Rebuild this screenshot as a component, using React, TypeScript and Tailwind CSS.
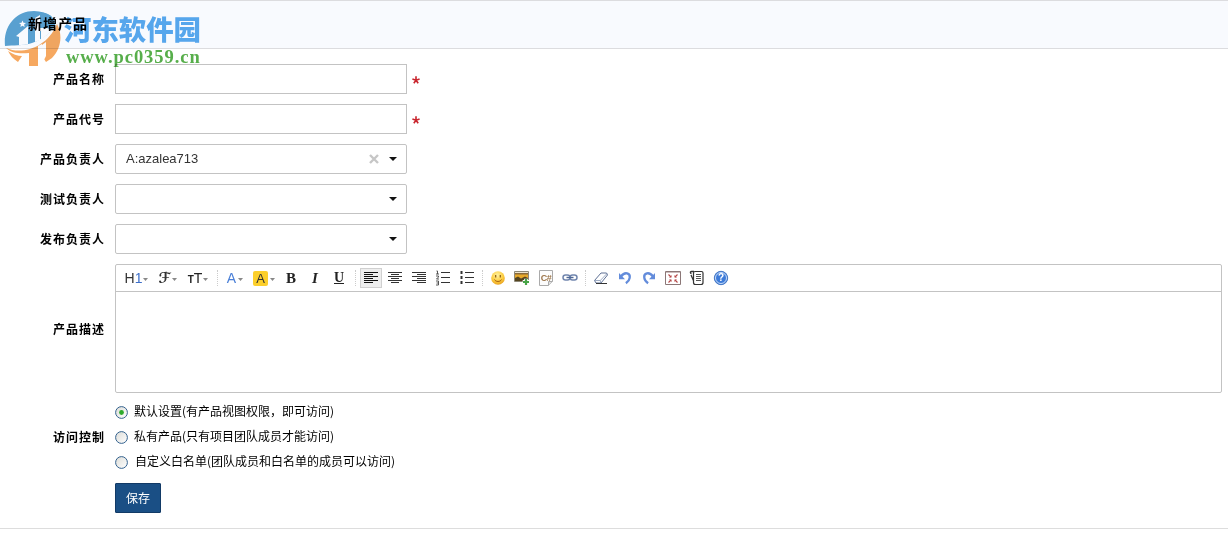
import React, { useState } from "react";
import clsx from "clsx";

type Person = {
  label: string;
  value: string;
};

type Access = {
  id: string;
  label: string;
  gap: string;
};

const people: Person[] = [
  { label: "产品负责人", value: "A:azalea713" },
  { label: "测试负责人", value: "" },
  { label: "发布负责人", value: "" },
];

const accessOptions: Access[] = [
  { id: "open", label: "默认设置(有产品视图权限，即可访问)", gap: "gap-[6px]" },
  { id: "private", label: "私有产品(只有项目团队成员才能访问)", gap: "gap-[6px]" },
  { id: "custom", label: "自定义白名单(团队成员和白名单的成员可以访问)", gap: "gap-[7px]" },
];

const Row = ({
  label,
  raised,
  children,
}: {
  label: string;
  raised?: boolean;
  children: React.ReactNode;
}) => (
  <div className="flex items-center">
    <div
      className={clsx(
        "w-[105px] shrink-0 pr-px text-right text-[12px] leading-[30px] font-bold tracking-[1px] text-black",
        raised && "pb-[10px]",
      )}
    >
      <span className="-mr-px">{label}</span>
    </div>
    <div className="ml-[10px] flex min-w-0 flex-1 items-center">{children}</div>
  </div>
);

const TextField = () => (
  <>
    <input className="h-[30px] w-[292px] border border-[#c3c3c3] bg-white px-[10px] text-[13px] outline-none" />
    <svg viewBox="0 0 8 8" className="mt-[1px] ml-[5px] h-2 w-2" stroke="#c9252d" strokeWidth="1.6" fill="none">
      <path d="M4 .3v3.9M.4 3 4 4.2 7.6 3M4 4.2 1.8 7.3M4 4.2l2.2 3.1" />
    </svg>
  </>
);

const Select = ({ value }: { value: string }) => (
  <div className="flex h-[30px] w-[292px] items-center rounded-[2px] border border-[#c3c3c3] bg-white pl-[10px] pr-[9px]">
    <span className="flex-1 font-['Liberation_Sans',sans-serif] text-[13px] text-[#333]">{value}</span>
    {value && (
      <svg viewBox="0 0 10 10" className="mr-[10px] h-[10px] w-[10px]" stroke="#c6c6c6" strokeWidth="2.4">
        <path d="M1 1l8 8M9 1 1 9" />
      </svg>
    )}
    <svg viewBox="0 0 8 4" className="h-1 w-2" fill="#111">
      <path d="M0 0h8L4 4z" />
    </svg>
  </div>
);

const Caret = () => (
  <svg viewBox="0 0 5 3" className="mt-[3px] h-[3px] w-[5px] shrink-0" fill="#888">
    <path d="M0 0h5L2.5 3z" />
  </svg>
);

const Tool = ({
  width = "w-6",
  active,
  children,
}: {
  width?: string;
  active?: boolean;
  children: React.ReactNode;
}) => (
  <button className={clsx("flex h-[22px] shrink-0 items-center justify-center text-[#333]", width)}>
    {active ? (
      <span className="flex h-[20px] w-[22px] items-center justify-center border border-[#d0d0d0] bg-[#eee]">
        {children}
      </span>
    ) : (
      children
    )}
  </button>
);

const Sep = ({ width }: { width: string }) => (
  <div className={clsx("flex h-4 shrink-0 justify-center", width)}>
    <div className="h-full border-l border-dotted border-[#ccc]" />
  </div>
);

const Icon = ({ children }: { children: React.ReactNode }) => (
  <svg viewBox="0 0 16 16" className="h-4 w-4 shrink-0" fill="none">
    {children}
  </svg>
);

const Toolbar = () => (
  <div className="flex h-[27px] items-center border-b border-[#c3c3c3] pl-[5px] font-['Liberation_Sans',sans-serif] text-[14px]">
    <Tool width="w-[31px]">
      <span className="mr-px text-[14px]">
        H<span className="text-[#3d6fc9]">1</span>
      </span>
      <Caret />
    </Tool>
    <Tool width="w-[31px]">
      <span className="mr-px font-['DejaVu_Serif','DejaVu_Sans',serif] text-[15px] leading-4 font-bold">ℱ</span>
      <Caret />
    </Tool>
    <Tool width="w-[30px]">
      <span className="mr-px text-[14px] text-[#222]">
        <span className="text-[10px] font-bold">T</span>T
      </span>
      <Caret />
    </Tool>
    <Sep width="w-2" />
    <Tool width="w-7">
      <span className="mr-[2px] text-[14px] text-[#4b80d8]">A</span>
      <Caret />
    </Tool>
    <Tool width="w-[30px]">
      <span className="mr-[2px] flex h-[15px] w-[15px] items-center justify-center rounded-[2px] bg-[#fccf2c] text-[13px] leading-none">
        A
      </span>
      <Caret />
    </Tool>
    <Tool>
      <span className="font-['Liberation_Serif',serif] text-[15px] font-bold text-[#222]">B</span>
    </Tool>
    <Tool>
      <span className="font-['Liberation_Serif',serif] text-[15px] font-bold text-[#222] italic">I</span>
    </Tool>
    <Tool>
      <span className="border-b border-[#222] font-['Liberation_Serif',serif] text-[14px] leading-[11px] font-bold text-[#222]">
        U
      </span>
    </Tool>
    <Sep width="w-2" />
    <Tool active>
      <Icon>
        <path d="M1 2.5h14M1 4.5h9M1 6.5h14M1 8.5h9M1 10.5h14M1 12.5h9" stroke="#111" />
      </Icon>
    </Tool>
    <Tool>
      <Icon>
        <path d="M1 2.5h14M4 4.5h8M1 6.5h14M4 8.5h8M1 10.5h14M4 12.5h8" stroke="#333" />
      </Icon>
    </Tool>
    <Tool>
      <Icon>
        <path d="M1 2.5h14M6 4.5h9M1 6.5h14M6 8.5h9M1 10.5h14M6 12.5h9" stroke="#333" />
      </Icon>
    </Tool>
    <Tool>
      <Icon>
        <path d="M6 2.5h9M6 7.5h9M6 12.5h9" stroke="#333" />
        <path
          d="M1.5 1h1v3M1 4h3M1 6h2.5v1L1.5 9H4M1 11h2.5v4H1M1.5 13h2"
          stroke="#444"
          strokeWidth=".9"
        />
      </Icon>
    </Tool>
    <Tool>
      <Icon>
        <path d="M6 2.5h9M6 7.5h9M6 12.5h9" stroke="#333" />
        <path d="M1.5 1h2v3h-2zM1.5 6h2v3h-2zM1.5 11h2v3h-2z" fill="#333" />
      </Icon>
    </Tool>
    <Sep width="w-[7px]" />
    <Tool>
      <Icon>
        <defs>
          <radialGradient id="face" cx=".45" cy=".3" r=".75">
            <stop offset="0" stopColor="#fff2a0" />
            <stop offset=".6" stopColor="#fccb3c" />
            <stop offset="1" stopColor="#e59a1b" />
          </radialGradient>
        </defs>
        <circle cx="8" cy="8" r="6.8" fill="url(#face)" />
        <path d="M5.7 5v2.4M10.3 5v2.4" stroke="#8a5a16" strokeWidth="1.2" />
        <path d="M4.5 9.5c1 2.6 6 2.6 7 0" stroke="#a35f13" />
      </Icon>
    </Tool>
    <Tool>
      <Icon>
        <path d="M.5 1.5h14v10H.5z" fill="#efe6cf" stroke="#8d8878" />
        <path d="M1 3h13v5.5H1z" fill="#e8a92a" />
        <path d="M1 3h13v1.5H1z" fill="#8a6a3a" />
        <path d="M1 8 4 6.5l3 2 4-2 3 1.5v3H1z" fill="#54441f" />
        <path d="M12 8.7v6.6M8.7 12h6.6" stroke="#fff" strokeWidth="3.8" />
        <path d="M12 9v6M9 12h6" stroke="#47a447" strokeWidth="2.2" />
      </Icon>
    </Tool>
    <Tool>
      <div className="grid">
        <svg viewBox="0 0 16 16" className="col-start-1 row-start-1 h-4 w-4" fill="none">
          <path d="M1.5.5h13v11l-4 4h-9z" fill="#fcfcfc" stroke="#aaa" />
          <path d="M14.5 11.5h-4v4" fill="#ddd" stroke="#aaa" />
        </svg>
        <span className="col-start-1 row-start-1 self-center justify-self-center text-[9px] leading-none font-bold tracking-[-0.5px] text-[#9b7448]">
          C#
        </span>
      </div>
    </Tool>
    <Tool>
      <Icon>
        <rect x="1" y="5" width="7" height="5" rx="2.5" stroke="#7186ae" strokeWidth="1.5" />
        <rect x="8" y="5" width="7" height="5" rx="2.5" stroke="#7186ae" strokeWidth="1.5" />
        <path d="M4.5 7.5h7" stroke="#4f6896" strokeWidth="1.4" />
      </Icon>
    </Tool>
    <Sep width="w-[7px]" />
    <Tool>
      <Icon>
        <path d="M1.5 10.5 8 3h5.5l1 2-6.5 8H3z" fill="#fff" stroke="#5f7195" />
        <path d="M1.5 10.5h5.8L14 3.5M7.3 10.5l.7 2.5" stroke="#8899b8" strokeWidth=".8" />
        <path d="M3 13.5h11" stroke="#333" />
      </Icon>
    </Tool>
    <Tool>
      <Icon>
        <path d="M4 6.5c4-5.5 9.5-3.2 8.7 1.3-.3 2.2-1.8 4-3.8 5.4" stroke="#638cdb" strokeWidth="2.3" />
        <path d="M2 3v6.2h6z" fill="#638cdb" />
      </Icon>
    </Tool>
    <Tool>
      <Icon>
        <path d="M12 6.5C8 1 2.5 3.3 3.3 7.8c.3 2.2 1.8 4 3.8 5.4" stroke="#638cdb" strokeWidth="2.3" />
        <path d="M14 3v6.2H8z" fill="#638cdb" />
      </Icon>
    </Tool>
    <Tool>
      <Icon>
        <path d="M.5 1.5h15v13H.5z" fill="#fff" stroke="#8b7777" />
        <path d="M1 2.5h14" stroke="#cbbcbc" />
        <path d="M3.5 4.5 6 7M12.5 4.5 10 7M3.5 12.5 6 10M12.5 12.5 10 10" stroke="#b54848" strokeWidth="1.1" />
        <path d="M6.5 5v2.5H4zM9.5 5v2.5H12zM6.5 12V9.5H4zM9.5 12V9.5H12z" fill="#b54848" />
      </Icon>
    </Tool>
    <Tool>
      <Icon>
        <path
          d="M4.5 6V3c0-1 .5-1.5 1.5-1.5h6.500c1 0 1.500.5 1.500 1.500v9.500c0 1.500-.7 2-2 2H6.500c-1.500 0-2-.7-2-2z"
          fill="#fff"
          stroke="#333"
          strokeWidth="1.2"
        />
        <path d="M5 1.500H2.500c-1.500 0-1.500 2 0 2M2 5l2.500 5.500" stroke="#333" strokeWidth="1.300" />
        <path d="M7 4.500h5M7 6.500h5M7 8.500h5M7 10.500h5" stroke="#555" />
      </Icon>
    </Tool>
    <Tool>
      <div className="grid">
        <svg viewBox="0 0 16 16" className="col-start-1 row-start-1 h-4 w-4" fill="none">
          <circle cx="8" cy="8" r="6.7" fill="#3d7bd9" stroke="#4678c4" />
          <circle cx="8" cy="8" r="5.5" stroke="#c9dcf7" strokeWidth="1" />
        </svg>
        <span className="col-start-1 row-start-1 self-center justify-self-center text-[10px] leading-none font-bold text-white">
          ?
        </span>
      </div>
    </Tool>
  </div>
);

const Radio = ({ checked }: { checked: boolean }) => (
  <svg viewBox="0 0 13 13" className="mt-[3px] h-[13px] w-[13px] shrink-0">
    <defs>
      <linearGradient id="well" x1="0" y1="0" x2="1" y2="1">
        <stop offset="0" stopColor="#dcdcd7" />
        <stop offset="1" stopColor="#fff" />
      </linearGradient>
    </defs>
    <circle cx="6.5" cy="6.5" r="5.9" fill="url(#well)" stroke="#34628f" />
    {checked && <circle cx="6.5" cy="6.5" r="2.4" fill="#2eaa2c" />}
  </svg>
);

const Watermark = () => (
  <div className="pointer-events-none absolute top-[9px] left-[4px] flex">
    <svg viewBox="0 0 58 58" className="h-[58px] w-[58px] opacity-85">
      <path d="M1 37C-1 17 12 2 30 2c7 0 13 2 18 6l4 6c-5 10-13 16-24 20C19 37 9 36 1 37z" fill="#3f94ca" />
      <path d="m18.500 11.500 1 2.300 2.500.2-1.900 1.600.6 2.400-2.200-1.300-2.100 1.300.5-2.400-1.900-1.600 2.500-.2z" fill="#fff" />
      <path d="M12 27 24 17v18c-3 1-6 1.200-9 1V28z" fill="#fff" />
      <path d="M31 9 36 6v13h6c3 0 4.500 1.500 4.500 4L37 31V22h-1v9l-5 2z" fill="#fff" />
      <path d="M36 4c5-1 9 1 12 4l-5 8h-7z" fill="#3f94ca" />
      <path d="M2 39c16 7 41 0 51-24 6 11 4 25-5 34l-6 4-4-6V35l-4 2v20h-9V44C16 45 7 44 2 39z" fill="#f59a45" />
      <path d="M4 42c4 3 10 5 14 5l-4 6C9 50 6 46 4 42z" fill="#f59a45" />
      <path d="M38 36l4-3v14l-4 8z" fill="#fff" />
    </svg>
    <div className="pl-[2px] whitespace-nowrap">
      <div className="font-['Noto_Sans_CJK_SC',sans-serif] text-[27.4px] leading-[38px] font-black text-[#58a9ed]">
        河东软件园
      </div>
      <div className="pl-[2px] font-['Liberation_Serif',serif] text-[18.5px] leading-[20px] font-bold tracking-[0.95px] text-[#57ae4b]">
        www.pc0359.cn
      </div>
    </div>
  </div>
);

export default function App() {
  const [access, setAccess] = useState("open");

  return (
    <div className="relative h-[536px] w-full overflow-hidden bg-white font-['Noto_Sans_CJK_SC',sans-serif] text-[12px] text-black">
      <Watermark />

      <div className="mix-blend-multiply">
        <header className="flex h-[49px] items-center border-t border-b border-[#dcdcdf] bg-[#f8fafe] pb-[2px] pl-[28px]">
          <h1 className="text-[14px] font-bold tracking-[1px]">新增产品</h1>
        </header>

        <form
          className="flex h-[480px] flex-col gap-[10px] border-b border-[#ddd] pt-[15px] pr-[6px]"
          onSubmit={(e) => e.preventDefault()}
        >
          <Row label="产品名称">
            <TextField />
          </Row>
          <Row label="产品代号">
            <TextField />
          </Row>
          {people.map((person) => (
            <Row key={person.label} label={person.label}>
              <Select value={person.value} />
            </Row>
          ))}
          <Row label="产品描述">
            <div className="h-[129px] w-full rounded-[2px] border border-[#c3c3c3]">
              <Toolbar />
            </div>
          </Row>
          <Row label="访问控制" raised>
            <div className="-mt-[5px] flex h-[83px] flex-col">
              {accessOptions.map((option) => (
                <label key={option.id} className={clsx("flex h-[25px] items-center", option.gap)}>
                  <input
                    type="radio"
                    name="access"
                    className="sr-only"
                    checked={access === option.id}
                    onChange={() => setAccess(option.id)}
                  />
                  <Radio checked={access === option.id} />
                  <span className="leading-[18px]">{option.label}</span>
                </label>
              ))}
            </div>
          </Row>
          <div className="-mt-[8px] pl-[115px]">
            <button className="h-[30px] w-[46px] rounded-[1px] border border-[#123a66] bg-[#1a4f85] text-[12px] text-white">
              保存
            </button>
          </div>
        </form>
      </div>
    </div>
  );
}
